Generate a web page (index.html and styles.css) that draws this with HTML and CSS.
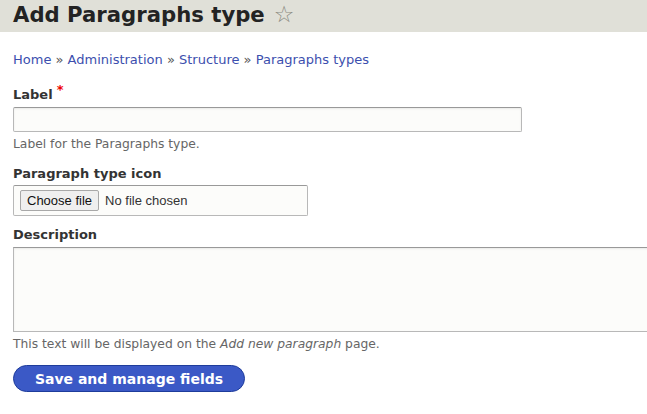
FILE: index.html
```html
<!DOCTYPE html>
<html lang="en">
<head>
    <meta charset="UTF-8">
    <meta name="viewport" content="width=device-width, initial-scale=1.0">
    <title>Add Paragraphs type</title>
    <link rel="stylesheet" href="styles.css">
</head>
<body>
    <header class="page-header">
        <h1 class="page-title">Add Paragraphs type<span class="shortcut">&#9734;</span></h1>
    </header>

    <div class="page-content">
        <nav class="breadcrumb">
            <a href="#">Home</a> &raquo; <a href="#">Administration</a> &raquo; <a href="#">Structure</a> &raquo; <a href="#">Paragraphs types</a>
        </nav>

        <form class="type-form">
            <div class="form-item">
                <label class="form-label" for="label">Label<span class="required">*</span></label>
                <input type="text" id="label" class="form-text">
                <div class="description">Label for the Paragraphs type.</div>
            </div>

            <div class="form-item form-item-file">
                <label class="form-label" for="icon">Paragraph type icon</label>
                <div class="file-box">
                    <span class="file-btn">Choose file</span>
                    <span class="file-name">No file chosen</span>
                </div>
            </div>

            <div class="form-item">
                <label class="form-label" for="description">Description</label>
                <textarea id="description" class="form-textarea"></textarea>
                <div class="description">This text will be displayed on the <em>Add new paragraph</em> page.</div>
            </div>

            <div class="form-actions">
                <button type="button" class="button-primary">Save and manage fields</button>
            </div>
        </form>
    </div>
</body>
</html>
```

FILE: styles.css
```css
body {
    margin: 0;
    font-family: "DejaVu Sans", Verdana, sans-serif;
    font-size: 13px;
    color: #222330;
    background: #fff;
    overflow: hidden;
}
.page-header {
    background: #e0e0d8;
    height: 32px;
    padding: 0 13px;
}
.page-title {
    margin: 0;
    font-size: 21.2px;
    line-height: 29px;
    font-weight: bold;
    color: #232323;
}
.shortcut {
    font-weight: normal;
    color: #8a8a80;
    font-size: 23px;
    margin-left: 9px;
}
.page-content {
    padding: 0 13px;
}
.breadcrumb {
    margin-top: 19px;
    line-height: 17px;
    color: #555;
    font-size: 13px;
}
.breadcrumb a {
    color: #3c4fae;
    text-decoration: none;
}
.type-form {
    margin-top: 18px;
}
.form-item {
    margin-bottom: 13px;
}
.form-item-file {
    margin-bottom: 10px;
}
.form-label {
    display: block;
    font-weight: bold;
    font-size: 13px;
    line-height: 18px;
    margin-bottom: 3px;
    color: #333;
}
.required {
    color: #e00;
    margin-left: 4px;
    position: relative;
    top: -5px;
}
.form-text {
    display: block;
    box-sizing: border-box;
    width: 509px;
    height: 25px;
    margin: 0;
    border: 1px solid #b8b8b8;
    border-top-color: #999;
    background: #fcfcfa;
    border-radius: 2px;
    box-shadow: inset 0 1px 2px rgba(0, 0, 0, 0.08);
}
.description {
    font-size: 12.3px;
    line-height: 16px;
    color: #666;
    margin-top: 4px;
}
.file-box {
    box-sizing: border-box;
    width: 295px;
    height: 31px;
    margin-top: -1px;
    border: 1px solid #b8b8b8;
    border-top-color: #999;
    background: #fcfcfa;
    border-radius: 2px;
    display: flex;
    align-items: center;
    padding-left: 6px;
    gap: 6px;
    font-family: "Liberation Sans", Arial, sans-serif;
    font-size: 13px;
}
.file-btn {
    box-sizing: border-box;
    height: 21px;
    line-height: 19px;
    padding: 0 6px;
    border: 1px solid #a8a8a8;
    border-radius: 2px;
    background: #efefef;
    color: #111;
}
.file-name {
    color: #333;
}
.form-textarea {
    display: block;
    box-sizing: border-box;
    width: 700px;
    height: 85px;
    margin: 0;
    border: 1px solid #b8b8b8;
    border-top-color: #999;
    background: #fcfcfa;
    box-shadow: inset 0 1px 2px rgba(0, 0, 0, 0.08);
    resize: none;
}
.form-actions {
    margin-top: 13px;
}
.button-primary {
    font-family: "DejaVu Sans", Verdana, sans-serif;
    font-weight: bold;
    font-size: 14px;
    color: #fff;
    background: #3b59c6;
    border: 1px solid #1e3c9b;
    border-radius: 20px;
    height: 27px;
    width: 232px;
    padding: 0;
}
```
